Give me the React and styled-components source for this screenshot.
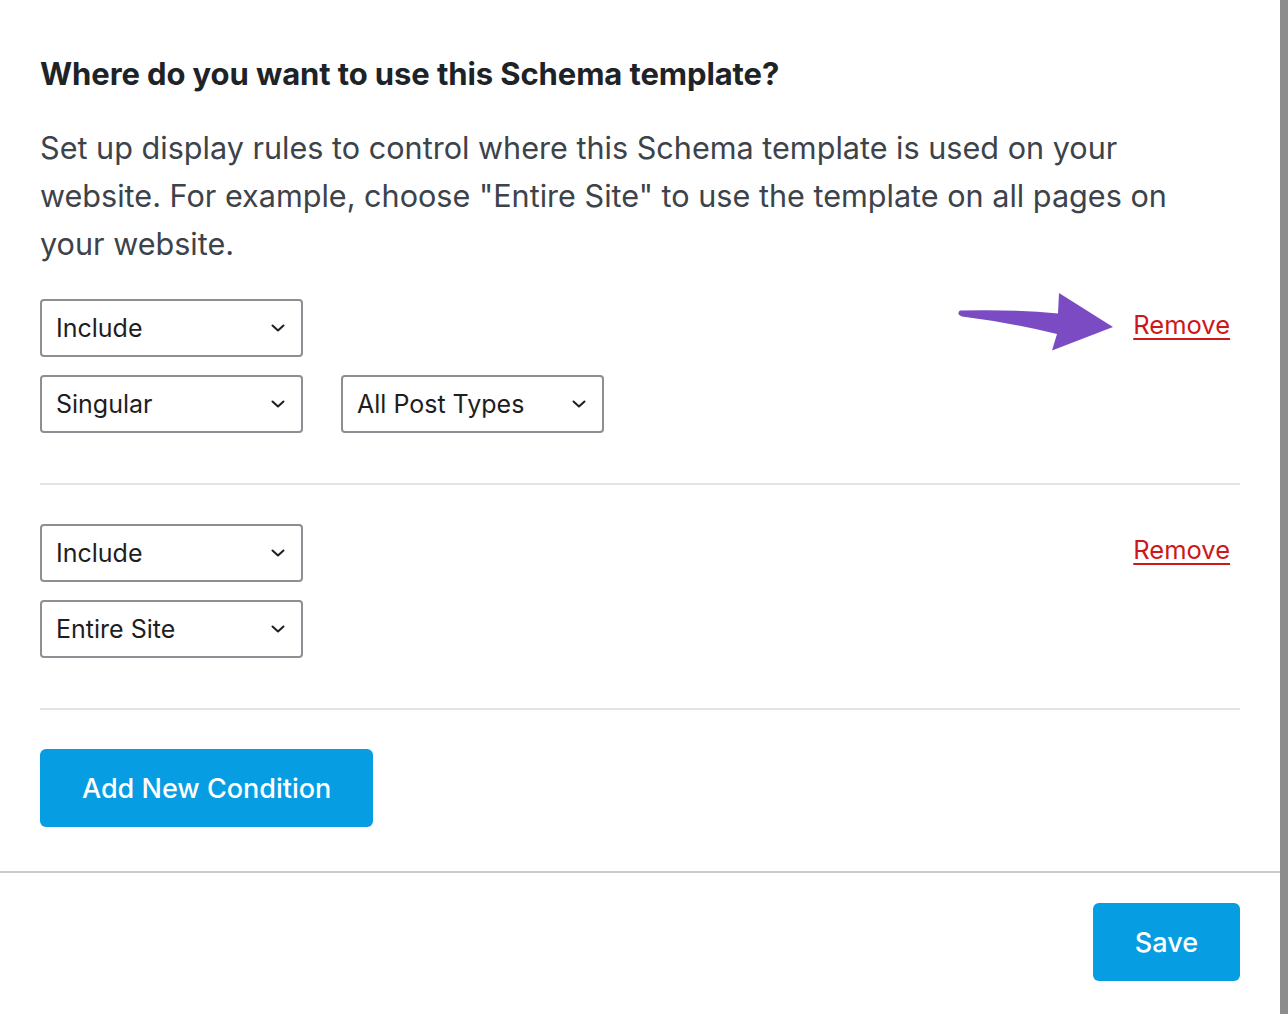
import React from 'react';
import styled, { createGlobalStyle } from 'styled-components';

const GlobalStyle = createGlobalStyle`
  html, body {
    margin: 0;
    padding: 0;
    background: #ffffff;
  }
  body {
    font-family: Inter, "Noto Sans", "Liberation Sans", sans-serif;
    -webkit-font-smoothing: antialiased;
  }
`;

const rules = [
  { id: 1, fields: [['Include'], ['Singular', 'All Post Types']], pointer: true },
  { id: 2, fields: [['Include'], ['Entire Site']], pointer: false },
];

const Chevron = () => (
  <svg width="14" height="8" viewBox="0 0 14 8" fill="none">
    <path d="M1.5 1.5 L7 6.5 L12.5 1.5" stroke="#1e1e1e" strokeWidth="2" strokeLinecap="round" strokeLinejoin="round" />
  </svg>
);

const PurpleArrow = () => (
  <svg width="170" height="75" viewBox="0 0 170 75">
    <path
      d="M9 25.5 Q60 24 107 28.5 L108 8 L162 42 L101 65.5 L106 49 Q62 38 11 31.5 Q5 29 9 25.5 Z"
      fill="#7b4bc4"
    />
  </svg>
);

const Select = ({ label }) => (
  <SelectBox>
    <span>{label}</span>
    <Chevron />
  </SelectBox>
);

const App = () => (
  <>
    <GlobalStyle />
    <Frame>
      <Panel>
        <Body>
          <Title>Where do you want to use this Schema template?</Title>
          <Intro>
            Set up display rules to control where this Schema template is used on your
            website. For example, choose "Entire Site" to use the template on all pages on
            your website.
          </Intro>
          {rules.map(rule => (
            <RuleGroup key={rule.id}>
              <Fields>
                {rule.fields.map((row, i) => (
                  <FieldRow key={i}>
                    {row.map(label => (
                      <Select key={label} label={label} />
                    ))}
                  </FieldRow>
                ))}
              </Fields>
              <RemoveWrap>
                {rule.pointer && (
                  <ArrowHint>
                    <PurpleArrow />
                  </ArrowHint>
                )}
                <RemoveLink href="#">Remove</RemoveLink>
              </RemoveWrap>
            </RuleGroup>
          ))}
          <PrimaryButton>Add New Condition</PrimaryButton>
        </Body>
        <Footer>
          <PrimaryButton>Save</PrimaryButton>
        </Footer>
      </Panel>
      <ScrollTrack />
    </Frame>
  </>
);

const Frame = styled.div`
  display: flex;
  width: 1288px;
  height: 1014px;
  overflow: hidden;
`;

const Panel = styled.div`
  flex: 1;
  display: flex;
  flex-direction: column;
  background: #ffffff;
`;

const ScrollTrack = styled.div`
  width: 8px;
  background: #8c8c8c;
`;

const Body = styled.div`
  padding: 55px 40px 44px 40px;
  display: flex;
  flex-direction: column;
  align-items: flex-start;
`;

const Title = styled.h2`
  margin: 0;
  font-size: 31px;
  line-height: 38px;
  font-weight: 700;
  color: #1d2327;
  letter-spacing: -0.1px;
`;

const Intro = styled.p`
  margin: 31px 0 31px 0;
  font-size: 30.6px;
  line-height: 48px;
  color: #3c434a;
  max-width: 1170px;
`;

const RuleGroup = styled.div`
  align-self: stretch;
  display: flex;
  justify-content: space-between;
  align-items: flex-start;
  padding-bottom: 50px;
  margin-bottom: 39px;
  border-bottom: 2px solid #e4e4e6;
`;

const Fields = styled.div`
  display: flex;
  flex-direction: column;
  gap: 18px;
`;

const FieldRow = styled.div`
  display: flex;
  gap: 38px;
`;

const SelectBox = styled.div`
  box-sizing: border-box;
  width: 263px;
  height: 58px;
  padding: 0 16px 0 14px;
  display: flex;
  align-items: center;
  justify-content: space-between;
  border: 2px solid #8c8f94;
  border-radius: 4px;
  font-size: 25px;
  color: #1e1e1e;
  background: #ffffff;
`;

const RemoveWrap = styled.div`
  position: relative;
  padding: 10px 10px 0 0;
`;

const ArrowHint = styled.div`
  position: absolute;
  right: 119px;
  top: -14px;
  line-height: 0;
`;

const RemoveLink = styled.a`
  font-size: 25.5px;
  line-height: 32px;
  color: #cc1818;
  text-decoration: underline;
  text-underline-offset: 4px;
  text-decoration-thickness: 2px;
`;

const PrimaryButton = styled.button`
  box-sizing: border-box;
  height: 78px;
  padding: 0 42px;
  border: none;
  border-radius: 6px;
  background: #069de3;
  color: #ffffff;
  font-family: inherit;
  font-size: 27px;
  font-weight: 500;
  cursor: pointer;
`;

const Footer = styled.div`
  border-top: 2px solid #c9cace;
  display: flex;
  justify-content: flex-end;
  padding: 30px 40px;
`;

export default App;
